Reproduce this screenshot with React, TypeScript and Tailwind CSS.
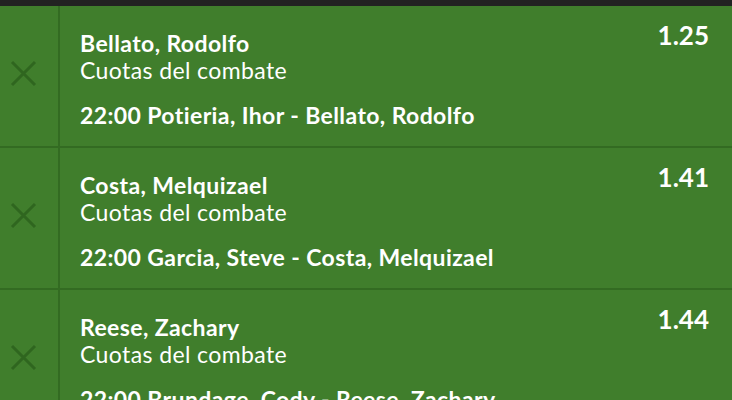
import React from "react";

const rows = [
  { name: "Bellato, Rodolfo", odds: "1.25", match: "22:00 Potieria, Ihor - Bellato, Rodolfo" },
  { name: "Costa, Melquizael", odds: "1.41", match: "22:00 Garcia, Steve - Costa, Melquizael" },
  { name: "Reese, Zachary", odds: "1.44", match: "22:00 Brundage, Cody - Reese, Zachary" },
];

function XIcon() {
  return (
    <svg width="27" height="27" viewBox="0 0 27 27" fill="none">
      <path d="M2 2 L25 25 M25 2 L2 25" stroke="#2f661f" strokeWidth="3" />
    </svg>
  );
}

export default function App() {
  return (
    <div className="w-[732px] h-[400px] overflow-hidden bg-[#407e2c] text-white" style={{ fontFamily: "Lato, 'Open Sans', sans-serif" }}>
      <div className="h-[6px] bg-[#222222]" />
      {rows.map((r) => (
        <div key={r.name} className="flex h-[142px] border-b-2 border-[#336b22]">
          <div className="w-[60px] shrink-0 border-r-2 border-[#336b22] flex items-center justify-center pb-[6px] pr-[11px]">
            <XIcon />
          </div>
          <div className="flex-1 flex pl-[20px] pr-[23px]">
            <div className="flex-1 pt-[24px] tracking-[0.4px]">
              <div className="text-[23px] leading-[27px] font-bold">{r.name}</div>
              <div className="text-[23px] leading-[27px]">Cuotas del combate</div>
              <div className="mt-[18px] text-[23px] leading-[27px] font-bold">{r.match}</div>
            </div>
            <div className="pt-[14px] text-[26px] leading-[31px] font-bold">{r.odds}</div>
          </div>
        </div>
      ))}
    </div>
  );
}
